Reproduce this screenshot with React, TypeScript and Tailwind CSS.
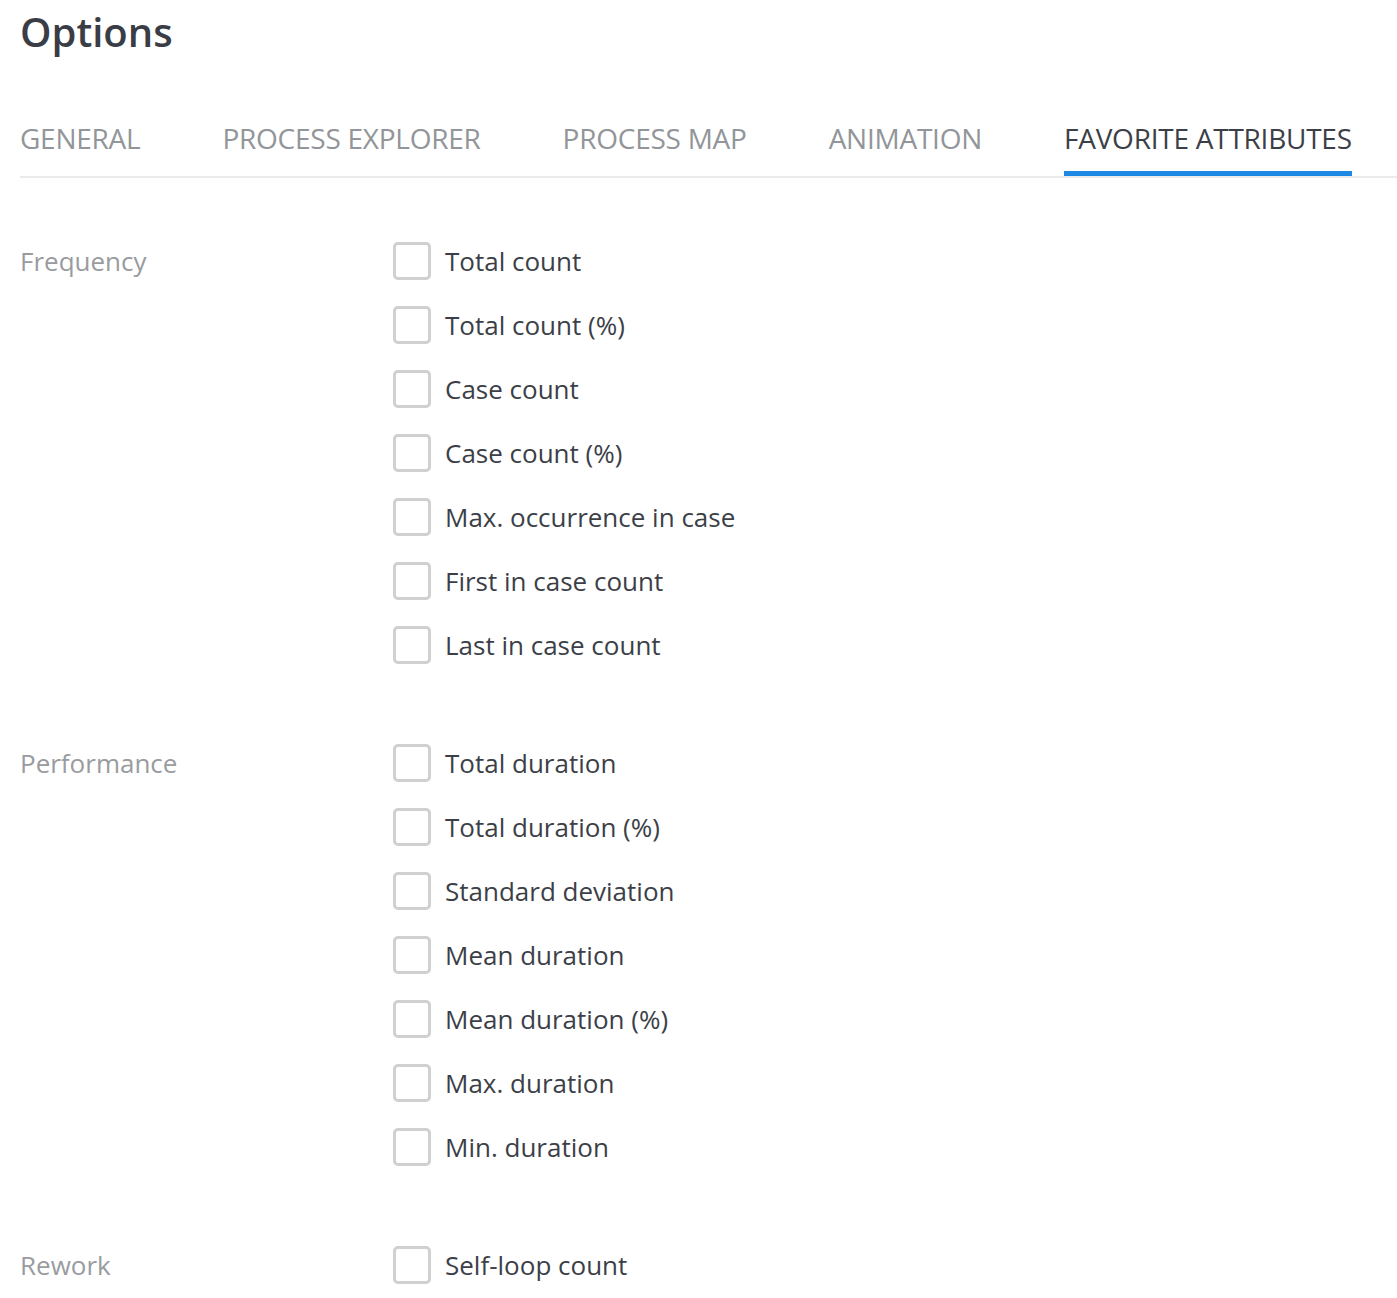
const tabs = ["GENERAL", "PROCESS EXPLORER", "PROCESS MAP", "ANIMATION", "FAVORITE ATTRIBUTES"];

const sections = [
  {
    title: "Frequency",
    items: [
      "Total count",
      "Total count (%)",
      "Case count",
      "Case count (%)",
      "Max. occurrence in case",
      "First in case count",
      "Last in case count",
    ],
  },
  {
    title: "Performance",
    items: [
      "Total duration",
      "Total duration (%)",
      "Standard deviation",
      "Mean duration",
      "Mean duration (%)",
      "Max. duration",
      "Min. duration",
    ],
  },
  { title: "Rework", items: ["Self-loop count"] },
];

export default function App() {
  return (
    <div className="min-h-screen bg-white pl-5 font-['Open_Sans',sans-serif]">
      <h1 className="pt-[6px] text-[40px] font-semibold leading-[52px] text-[#3a3d46]">Options</h1>

      <div className="mt-[62px] flex gap-[82px] border-b-2 border-[#ebebeb]">
        {tabs.map((t, i) => {
          const active = i === tabs.length - 1;
          return (
            <button
              key={t}
              type="button"
              className={`relative pb-[20px] text-[28px] leading-[36px] tracking-[-0.25px] ${
                active ? "text-[#3c3f48]" : "text-[#929599]"
              }`}
            >
              {t}
              {active ? <span className="absolute inset-x-0 bottom-0 h-[5px] bg-[#1e88e5]" /> : null}
            </button>
          );
        })}
      </div>

      <div className="flex flex-col gap-[54px] pt-[51px]">
        {sections.map((s) => (
          <div key={s.title} className="flex">
            <div className="flex h-16 w-[373px] items-center text-[26px] text-[#999b9f]">{s.title}</div>
            <div className="flex flex-col">
              {s.items.map((item) => (
                <label key={item} className="flex h-16 cursor-pointer items-center gap-[14px]">
                  <span className="h-[38px] w-[38px] rounded-[5px] border-[3px] border-[#d0d0d0] bg-white" />
                  <span className="text-[26px] text-[#3c3f48]">{item}</span>
                </label>
              ))}
            </div>
          </div>
        ))}
      </div>
    </div>
  );
}
